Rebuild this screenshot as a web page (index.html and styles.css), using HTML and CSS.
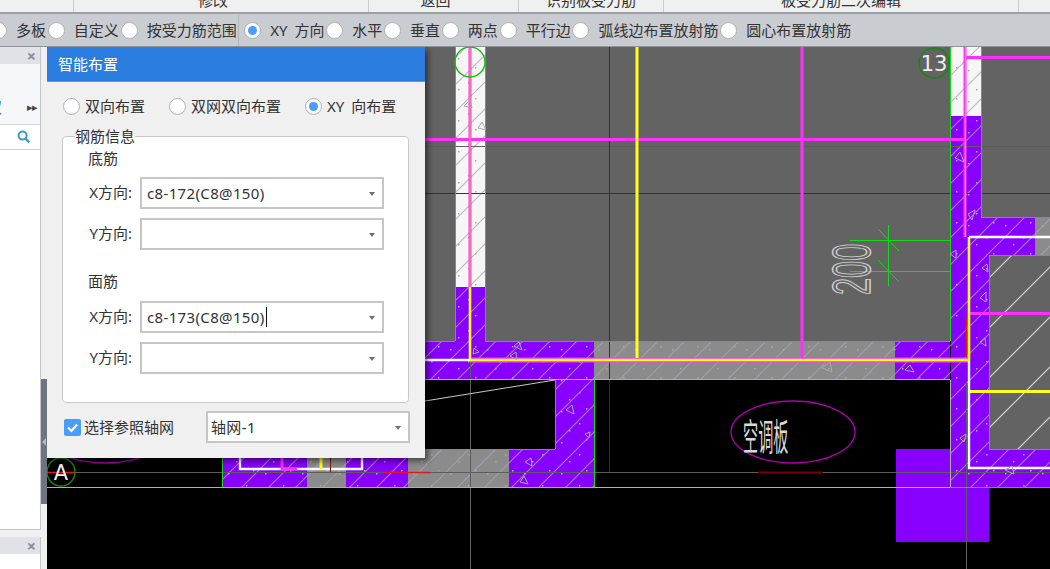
FILE: index.html
```html
<!DOCTYPE html>
<html lang="zh-CN">
<head>
<meta charset="utf-8">
<title>智能布置</title>
<link rel="stylesheet" href="styles.css">
</head>
<body>
<div class="app">
  <div class="ribbon">
    <div class="rb rb-a"></div>
    <div class="rb rb-b">修改</div>
    <div class="rb rb-c">返回</div>
    <div class="rb rb-d">识别板受力筋</div>
    <div class="rb rb-e">板受力筋二次编辑</div>
    <div class="rb rb-f"></div>
  </div>
  <div class="toolbar">
    <div class="opt first"><span class="radio"></span><span>多板</span></div>
    <div class="opt"><span class="radio"></span><span>自定义</span></div>
    <div class="opt"><span class="radio"></span><span>按受力筋范围</span></div>
    <div class="tsep"></div>
    <div class="opt"><span class="radio on"></span><span>XY 方向</span></div>
    <div class="opt"><span class="radio"></span><span>水平</span></div>
    <div class="opt"><span class="radio"></span><span>垂直</span></div>
    <div class="opt"><span class="radio"></span><span>两点</span></div>
    <div class="opt"><span class="radio"></span><span>平行边</span></div>
    <div class="opt"><span class="radio"></span><span>弧线边布置放射筋</span></div>
    <div class="opt"><span class="radio"></span><span>圆心布置放射筋</span></div>
  </div>
  <div class="main">
    <aside class="side">
      <div class="panel panel-top">
        <div class="phead"><span class="close">×</span></div>
        <div class="prow"><span class="pfrag">双</span><span class="more">▸▸</span></div>
        <div class="psearch">
          <svg class="mag" width="14" height="14" viewBox="0 0 14 14"><circle class="mag-c" cx="5.6" cy="5.6" r="4"/><path class="mag-h" d="M8.6 8.6L12.4 12.4"/></svg>
        </div>
      </div>
      <div class="panel panel-bottom">
        <div class="phead"><span class="close">×</span></div>
      </div>
    </aside>
    <div class="splitter"><div class="grip"><span class="grip-arrow"></span></div></div>
    <div class="canvas">
      <svg class="cad" width="1003" height="522" viewBox="47 47 1003 522">
        <defs>
          <pattern id="hatch" patternUnits="userSpaceOnUse" width="27" height="27"><path class="hl" d="M-3 30L30 -3M-3 3L3 -3M24 30L30 24"/></pattern>
          <pattern id="hatch2" patternUnits="userSpaceOnUse" width="50" height="50" x="5" y="12"><path class="hl2" d="M-3 53L53 -3M-3 3L3 -3M47 53L53 47"/></pattern>
          <pattern id="specks" patternUnits="userSpaceOnUse" width="37" height="31"><path class="speck" d="M6 8h1.5v1.5H6zM24 20h1.5v1.5H24zM31 5h1.5v1.5H31zM14 27h1.5v1.5H14z"/></pattern>
        </defs>
        <rect class="f-gray" x="47" y="47" width="903" height="333"/>
        <rect class="f-gray" x="981" y="47" width="69" height="170"/>
        <rect class="f-gray" x="989" y="255" width="61" height="194"/>
        <rect class="f-white" x="455" y="47" width="30" height="240"/>
        <rect class="f-white" x="951" y="47" width="30" height="69"/>
        <path class="f-purple" d="M455 287H485V341H594V487H509V449H555V380H47V341H455Z"/>
        <rect class="f-concrete" x="594" y="341" width="301" height="38"/>
        <rect class="f-purple" x="895" y="341" width="55" height="38"/>
        <rect class="f-purple" x="896" y="449" width="93" height="93"/>
        <path class="f-purple" d="M951 116H981V217H1035V255H989V449H1050V487H951Z"/>
        <rect class="f-concrete" x="1035" y="217" width="15" height="38"/>
        <rect class="f-purple" x="222" y="449" width="85" height="38"/>
        <rect class="f-concrete" x="307" y="449" width="39" height="38"/>
        <rect class="f-purple" x="346" y="449" width="62" height="38"/>
        <rect class="f-concrete" x="408" y="449" width="101" height="38"/>
        <path class="f-hatch" d="M455 47H485V341H950V47H981V217H1050V255H989V449H1050V487H950V379H594V487H222V449H555V380H425V341H455Z"/>
        <path class="f-specks" d="M455 47H485V341H950V47H981V217H1050V255H989V449H1050V487H950V379H594V487H222V449H555V380H425V341H455Z"/>
        <rect class="f-hatch2" x="989" y="255" width="61" height="194"/>

        <path class="dim" d="M47 146.5H1050M47 472.5H1050M470.5 47V569M966.5 381V569"/>
        <path class="dark-red" d="M609.5 47V472M425 193.5H1050"/>
        <path class="dark-red-b" d="M758 472.5H823"/>
        <path class="red" d="M47 472.5H75M383 472.5H430M966.5 317V360"/>

        <path class="green" d="M455.5 47V341M485.5 47V341M485 341.5H950M950.5 47V341M981.5 47V217M981 217.5H1050M989 255.5H1050M989.5 255V449M989 449.5H1050M950 487.5H1050M425 341.5H455M555.5 380V449M425 449.5H555M594.5 380V487M222.5 449V487"/>
        <path class="grayline" d="M47 487.5H950M425 379.5H950M950.5 380V487"/>
        <path class="slant" d="M425 401L555 380"/>
        <path class="green-thin" d="M850 240.5H950M850 271.5H950M888.5 225V286M878 229L899 251M878 260L899 282"/>

        <path class="pink" d="M470 47V287M425 139.5H965M802 47V358M965 47V237M965 57.5H1050M970 313.5H1050"/>
        <path class="orange" d="M965.5 47V237M470 47V287"/>
        <path class="pinkwide" d="M470 360H968"/>
        <path class="yellow" d="M637 47V358M970 391.5H1050"/>
        <path class="yellow-thin" d="M470 287V360M470 360H968M969 237V361"/>
        <path class="white" d="M425 360H470M969 237H1050M969 361V468H1050M240 458V469H362V458"/>
        <path class="pink" d="M282 458V469H297"/>
        <path class="yellow" d="M321 458V469"/>
        <path class="dark-red" d="M330.5 458V472"/>

        <g class="tri">
          <path d="M510 356L516 352L517 360Z"/><path d="M514 346L519 342L522 350Z"/><path d="M566 410L572 405L574 414Z"/><path d="M585 434L590 432L589 438Z"/><path d="M525 462L531 458L532 466Z"/><path d="M520 482L524 476L528 484Z"/>
          <path d="M474 348L479 352L473 354Z"/><path d="M464 106L470 100L472 108Z"/><path d="M478 128L482 122L486 130Z"/><path d="M905 370L910 365L914 372Z"/><path d="M955 158L960 152L964 162Z"/><path d="M968 214L975 210L972 220Z"/><path d="M950 254L956 250L956 258Z"/><path d="M982 268L987 264L988 272Z"/><path d="M980 342L985 338L986 346Z"/><path d="M960 438L966 434L964 442Z"/><path d="M1005 470L1012 466L1014 474Z"/><path d="M822 368L830 362L832 372Z"/><path d="M980 298L986 292L986 302Z"/>
        </g>
        <g class="bubble-g">
          <circle class="bubble-bright" cx="470" cy="62" r="15"/>
          <circle class="bubble" cx="934" cy="63" r="15"/>
          <circle class="bubble" cx="61" cy="472" r="14"/>
        </g>
        <text class="axis" x="934" y="71" text-anchor="middle">13</text>
        <text class="axis" x="61" y="480" text-anchor="middle">A</text>
        <ellipse class="oval" cx="793" cy="432" rx="62" ry="31"/>
        <ellipse class="oval" cx="105" cy="432" rx="62" ry="31"/>
        <text class="cad-cn" transform="translate(743 451) scale(.41 1)">空调板</text>
        <text class="cad-dim" transform="translate(870 295) rotate(-90) scale(.57 1)">200</text>
      </svg>

      <section class="dialog">
        <header class="dtitle">智能布置</header>
        <div class="dradios">
          <label class="ritem"><span class="radio"></span><span>双向布置</span></label>
          <label class="ritem"><span class="radio"></span><span>双网双向布置</span></label>
          <label class="ritem"><span class="radio on"></span><span>XY 向布置</span></label>
        </div>
        <fieldset class="group">
          <legend class="legend">钢筋信息</legend>
          <div class="subtitle">底筋</div>
          <div class="frow"><span class="flabel">X方向:</span><div class="combo">c8-172(C8@150)</div></div>
          <div class="frow"><span class="flabel">Y方向:</span><div class="combo"></div></div>
          <div class="subtitle second">面筋</div>
          <div class="frow"><span class="flabel">X方向:</span><div class="combo"><span class="caret">c8-173(C8@150)</span></div></div>
          <div class="frow"><span class="flabel">Y方向:</span><div class="combo"></div></div>
        </fieldset>
        <div class="dfoot">
          <span class="check"><svg width="17" height="17" viewBox="0 0 17 17"><path class="checkmark" d="M4 8.5L7.5 12L13 5.5"/></svg></span>
          <span class="checklabel">选择参照轴网</span>
          <div class="combo grid-combo">轴网-1</div>
        </div>
      </section>
    </div>
  </div>
</div>
</body>
</html>
```
FILE: styles.css
```css
* { box-sizing: border-box; }
html, body { margin: 0; padding: 0; height: 100%; overflow: hidden; }
body { font-family: "Noto Sans", "Noto Sans CJK SC", sans-serif; font-size: 15px; color: #333; background: #f0f0f0; }
.app { width: 1050px; height: 569px; display: flex; flex-direction: column; overflow: hidden; }

/* ribbon */
.ribbon { height: 14px; flex: none; display: flex; overflow: hidden; background: #eff1f1; border-bottom: 2px solid #9da0a3; }
.rb { height: 12px; flex: none; display: flex; align-items: flex-end; justify-content: center; border-right: 1px solid #c9cccf; font-size: 15px; line-height: 16px; padding-bottom: 4px; overflow: visible; white-space: nowrap; }
.rb-a { width: 74px; }
.rb-b { width: 295px; padding-right: 16px; }
.rb-c { width: 150px; padding-right: 16px; }
.rb-d { width: 145px; }
.rb-e { width: 355px; }
.rb-f { flex: 1; border-right: 0; }

/* option bar */
.toolbar { height: 33px; flex: none; display: flex; align-items: center; gap: 1.8px; background: #c9ccd1; border-bottom: 1px solid #8f9296; white-space: nowrap; line-height: 20px; word-spacing: 3px; }
.opt { display: flex; align-items: center; gap: 9px; }
.opt.first { margin-left: -10px; }
.tsep { width: 1px; height: 31px; background: #b3b6ba; margin: 0 3px 0 0; }

.radio { width: 17px; height: 17px; flex: none; border-radius: 50%; background: #fff; border: 1px solid #aeb0b3; display: flex; align-items: center; justify-content: center; }
.radio.on::after { content: ""; width: 9px; height: 9px; border-radius: 50%; background: #4a9dfb; }

.main { flex: 1; min-height: 0; display: flex; }

/* left panels */
.side { width: 41px; flex: none; display: flex; flex-direction: column; gap: 7px; background: #f0f0f0; }
.panel { background: #fff; border-right: 1px solid #c4c6c9; display: flex; flex-direction: column; overflow: hidden; }
.panel-top { height: 483px; border-bottom: 1px solid #c4c6c9; }
.panel-bottom { flex: 1; }
.phead { height: 17px; flex: none; background: #dfe2e6; display: flex; justify-content: flex-end; align-items: center; padding-right: 4px; }
.close { font-size: 16px; line-height: 16px; font-weight: 700; color: #8a8d91; }
.prow { height: 61px; flex: none; display: flex; align-items: flex-end; justify-content: space-between; background: #f6f7f8; border-bottom: 1px solid #d3d5d8; padding: 0 3px 8px 0; line-height: 18px; }
.pfrag { margin-left: -13px; font-size: 15px; color: #2c7de0; }
.more { font-size: 11px; letter-spacing: -1px; color: #444; }
.psearch { height: 25px; flex: none; border-bottom: 1px solid #cfd2d5; display: flex; align-items: center; justify-content: flex-end; padding-right: 9px; }
.mag-c { fill: none; stroke: #3b9bc4; stroke-width: 2; }
.mag-h { fill: none; stroke: #3b9bc4; stroke-width: 2.4; }

.splitter { width: 6px; flex: none; background: #f0f0f0; padding-top: 332px; }
.grip { height: 125px; background: #6d7580; display: flex; align-items: center; justify-content: center; }
.grip-arrow { width: 0; height: 0; border: 4px solid transparent; border-left-width: 0; border-right: 4px solid #b3b8bf; }

/* drawing */
.canvas { flex: 1; position: relative; background: #000; overflow: hidden; }
.cad { display: block; }
.f-gray { fill: #636363; }
.f-white { fill: #f6f6f6; }
.f-purple { fill: #8800ff; }
.f-concrete { fill: #8b8b8b; }
.f-hatch { fill: url(#hatch); }
.f-hatch2 { fill: url(#hatch2); }
.f-specks { fill: url(#specks); }
.speck { fill: #aaa; }
.hl { stroke: #a9a3b5; stroke-opacity: .75; stroke-width: 1.2; fill: none; }
.hl2 { stroke: #d8d8d8; stroke-width: 1.2; fill: none; }
.dim { stroke: #5c5c5c; stroke-width: 1; fill: none; }
.dark-red { stroke: #7a1414; stroke-width: 1; fill: none; }
.dark-red-b { stroke: #7a0000; stroke-width: 2; fill: none; }
.red { stroke: #e01818; stroke-width: 1.4; fill: none; }
.green { stroke: #14dc14; stroke-width: 1; fill: none; }
.green-thin { stroke: #14dc14; stroke-width: 1; fill: none; }
.grayline { stroke: #b0b0b0; stroke-width: 1; fill: none; }
.slant { stroke: #c8c8c8; stroke-width: 1; fill: none; }
.pink { stroke: #ff30ff; stroke-width: 3; fill: none; }
.orange { stroke: #f09a60; stroke-width: 1.2; fill: none; }
.pinkwide { stroke: #ff30ff; stroke-width: 5; fill: none; }
.yellow { stroke: #ffff1e; stroke-width: 3; fill: none; }
.yellow-thin { stroke: #ffff1e; stroke-width: 2.6; fill: none; }
.white { stroke: #fff; stroke-width: 2.4; fill: none; }
.tri path { fill: none; stroke: #aaa; stroke-width: 1; }
.bubble-g { fill: none; }
.bubble { stroke: #0f8a0f; stroke-width: 1.4; }
.bubble-bright { stroke: #12c012; stroke-width: 1.4; }
.axis { fill: #eee; font-family: "DejaVu Sans", sans-serif; font-size: 21px; }
.oval { fill: none; stroke: #b000b0; stroke-width: 1.3; }
.cad-cn { fill: #d8d8d8; font-family: "Noto Sans CJK SC", sans-serif; font-size: 37px; }
.cad-dim { fill: none; stroke: #d0d0d0; stroke-width: 1.2; vector-effect: non-scaling-stroke; font-family: "Liberation Sans", sans-serif; font-size: 54px; }

/* dialog */
.dialog { position: absolute; left: 0; top: 0; width: 378px; height: 411px; background: #f0f0f0; box-shadow: 3px 3px 6px rgba(0,0,0,.5); display: flex; flex-direction: column; }
.dtitle { height: 35px; flex: none; padding-left: 11px; line-height: 34px; font-size: 15px; background: #2c7de0; color: #fff; border-bottom: 1px solid #5a9ae8; }
.dradios { display: flex; gap: 24px; padding: 15px 0 0 16px; line-height: 18px; height: 33px; flex: none; word-spacing: 3px; }
.ritem { display: flex; align-items: center; gap: 5px; }
.group { margin: 12px 15px 0; padding: 0 0 0 25px; width: 347px; height: 276px; flex: none; border: 1px solid #c8c8c8; border-radius: 4px; background: #fff; min-width: 0; }
.legend { margin-left: -13px; padding: 0; font-size: 15px; line-height: 18px; }
.subtitle { margin-top: 4px; height: 18px; line-height: 18px; }
.subtitle.second { margin-top: 22px; }
.subtitle + .frow { margin-top: 10px; }
.subtitle.second + .frow { margin-top: 11px; }
.frow { display: flex; align-items: center; gap: 8px; margin-top: 9px; }
.flabel { width: 44px; text-align: right; line-height: 20px; padding-bottom: 3px; flex: none; white-space: nowrap; margin-left: 0; }
.combo { position: relative; width: 244px; height: 32px; flex: none; background: #fff; border: 2px solid #c6c6c6; padding-left: 5px; line-height: 28px; white-space: nowrap; letter-spacing: .35px; }
.combo::after { content: ""; position: absolute; right: 7px; top: 13px; border: 3.5px solid transparent; border-top: 4px solid #707070; border-bottom-width: 0; }
.caret { border-right: 1px solid #111; padding-right: 1px; }
.dfoot { display: flex; align-items: center; margin-top: 8px; padding: 0 15px 0 17px; }
.check { width: 17px; height: 17px; flex: none; background: #4a9dfb; border-radius: 2px; display: block; }
.check svg { display: block; }
.checkmark { fill: none; stroke: #fff; stroke-width: 2.2; }
.checklabel { margin-left: 3px; line-height: 20px; }
.grid-combo { margin-left: auto; width: 204px; padding-left: 3px; }
```
